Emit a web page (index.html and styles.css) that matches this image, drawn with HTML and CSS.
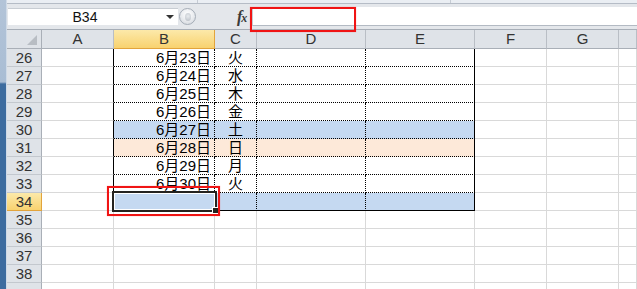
FILE: index.html
```html
<!DOCTYPE html>
<html lang="ja">
<head>
    <meta charset="UTF-8">
    <meta name="viewport" content="width=device-width, initial-scale=1.0">
    <title>Sheet1 - B34</title>
    <link rel="stylesheet" href="styles.css">
</head>
<body>

<div class="window-edge"></div>

<div class="main">
    <div class="ribbon-end">
        <div class="group g1"></div>
        <div class="group g2"></div>
    </div>

    <div class="formula-bar">
        <div class="name-box">
            <span class="name">B34</span>
            <span class="drop"><span class="arrow"></span></span>
        </div>
        <div class="knob"><span class="dimple"></span></div>
        <div class="fx"><i>f</i><i class="x">x</i></div>
        <div class="formula-input"></div>
    </div>

    <div class="sheet">
        <!-- column headers -->
        <div class="corner"><svg width="10" height="10" viewBox="0 0 10 10"><polygon points="10,0 10,10 0,10" fill="#b8bdc3"/></svg></div>
        <div class="hd">A</div>
        <div class="hd sel">B</div>
        <div class="hd">C</div>
        <div class="hd">D</div>
        <div class="hd">E</div>
        <div class="hd">F</div>
        <div class="hd">G</div>
        <div class="hd"></div>

        <div class="rh">26</div>
        <div class="c ta"></div><div class="c t date">6月23日</div><div class="c t wd">火</div><div class="c t"></div><div class="c t last"></div>
        <div class="c"></div><div class="c"></div><div class="c"></div>

        <div class="rh">27</div>
        <div class="c ta"></div><div class="c t date">6月24日</div><div class="c t wd">水</div><div class="c t"></div><div class="c t last"></div>
        <div class="c"></div><div class="c"></div><div class="c"></div>

        <div class="rh">28</div>
        <div class="c ta"></div><div class="c t date">6月25日</div><div class="c t wd">木</div><div class="c t"></div><div class="c t last"></div>
        <div class="c"></div><div class="c"></div><div class="c"></div>

        <div class="rh">29</div>
        <div class="c ta"></div><div class="c t date">6月26日</div><div class="c t wd">金</div><div class="c t"></div><div class="c t last"></div>
        <div class="c"></div><div class="c"></div><div class="c"></div>

        <div class="rh">30</div>
        <div class="c ta"></div><div class="c t date blue">6月27日</div><div class="c t wd blue">土</div><div class="c t blue"></div><div class="c t last blue"></div>
        <div class="c"></div><div class="c"></div><div class="c"></div>

        <div class="rh">31</div>
        <div class="c ta"></div><div class="c t date peach">6月28日</div><div class="c t wd peach">日</div><div class="c t peach"></div><div class="c t last peach"></div>
        <div class="c"></div><div class="c"></div><div class="c"></div>

        <div class="rh">32</div>
        <div class="c ta"></div><div class="c t date">6月29日</div><div class="c t wd">月</div><div class="c t"></div><div class="c t last"></div>
        <div class="c"></div><div class="c"></div><div class="c"></div>

        <div class="rh">33</div>
        <div class="c ta"></div><div class="c t date">6月30日</div><div class="c t wd">火</div><div class="c t"></div><div class="c t last"></div>
        <div class="c"></div><div class="c"></div><div class="c"></div>

        <div class="rh sel">34</div>
        <div class="c ta"></div>
        <div class="c t bot blue active"><span class="selection"><span class="fill-handle"></span></span></div>
        <div class="c t bot blue"></div><div class="c t bot blue"></div><div class="c t last bot blue"></div>
        <div class="c"></div><div class="c"></div><div class="c"></div>

        <div class="rh">35</div>
        <div class="c"></div><div class="c"></div><div class="c"></div><div class="c"></div><div class="c"></div><div class="c"></div><div class="c"></div><div class="c"></div>

        <div class="rh">36</div>
        <div class="c"></div><div class="c"></div><div class="c"></div><div class="c"></div><div class="c"></div><div class="c"></div><div class="c"></div><div class="c"></div>

        <div class="rh">37</div>
        <div class="c"></div><div class="c"></div><div class="c"></div><div class="c"></div><div class="c"></div><div class="c"></div><div class="c"></div><div class="c"></div>

        <div class="rh">38</div>
        <div class="c"></div><div class="c"></div><div class="c"></div><div class="c"></div><div class="c"></div><div class="c"></div><div class="c"></div><div class="c"></div>

        <div class="rh"></div>
        <div class="c"></div><div class="c"></div><div class="c"></div><div class="c"></div><div class="c"></div><div class="c"></div><div class="c"></div><div class="c"></div>
    </div>
</div>

<!-- red callout frames -->
<div class="mark mark-formula"></div>
<div class="mark mark-cell"></div>

</body>
</html>
```

FILE: styles.css
```css
body {
    margin: 0;
    padding: 0;
    position: relative;
    display: flex;
    width: 637px;
    height: 289px;
    overflow: hidden;
    background: #fff;
    font-family: "Liberation Sans", "Noto Sans CJK JP", sans-serif;
    color: #000;
}

.window-edge {
    width: 6px;
    flex: none;
    border-right: 1px solid #cfdae7;
    background: linear-gradient(to bottom, #b3c4d8 0, #a9bdd4 82px, #3d6c9f 84px, #3d6c9f 100%);
}

.main {
    flex: 1;
    display: flex;
    flex-direction: column;
}

.main > div {
    flex: none;
}

/* bottom edge of the ribbon */
.ribbon-end {
    display: flex;
    height: 3px;
    background: #eaeef3;
    border-bottom: 1px solid #b5bcc6;
}

.ribbon-end .group {
    height: 3px;
    border-right: 1px solid #c6ccd4;
    box-sizing: border-box;
}

.ribbon-end .g1 { width: 191px; }
.ribbon-end .g2 { width: 253px; }

/* formula bar */
.formula-bar {
    display: flex;
    align-items: flex-start;
    height: 25px;
    background: #e4e7eb;
    border-bottom: 1px solid #a7aeb7;
}

.name-box {
    display: flex;
    width: 170px;
    height: 17px;
    margin: 4px 0 0 1px;
    background: #fff;
    border-top: 1px solid #c8cdd3;
    box-sizing: border-box;
}

.name-box .name {
    flex: 1;
    text-align: center;
    font-size: 14px;
    line-height: 16px;
    color: #111;
}

.name-box .drop {
    width: 16px;
    display: flex;
    justify-content: center;
    align-items: center;
}

.name-box .arrow {
    width: 0;
    height: 0;
    border-left: 4px solid transparent;
    border-right: 4px solid transparent;
    border-top: 4px solid #333;
}

.knob {
    width: 17px;
    height: 17px;
    margin: 4px 0 0 1px;
    box-sizing: border-box;
    border: 1px solid #a5adb7;
    border-radius: 50%;
    background: radial-gradient(circle at 50% 35%, #ffffff 0, #eceef1 45%, #cfd4da 100%);
    display: flex;
    justify-content: center;
    align-items: center;
}

.knob .dimple {
    width: 6px;
    height: 8px;
    border-radius: 50%;
    background: radial-gradient(circle at 50% 40%, #e8ebee, #b6bcc4);
}

.fx {
    width: 15px;
    margin: 5px 0 0 41px;
    font-family: "Liberation Serif", serif;
    font-size: 16px;
    font-weight: bold;
    line-height: 16px;
    color: #3a3a3a;
    white-space: nowrap;
}

.fx .x {
    font-size: 12px;
    margin-left: -1px;
}

.formula-input {
    flex: 1;
    height: 18px;
    margin-top: 3px;
    background: #fff;
    border-left: 1px solid #c6cbd1;
    border-bottom: 1px solid #b3bac3;
}

/* worksheet */
.sheet {
    display: grid;
    grid-template-columns: 35px 72px 101px 42px 109px 109px 72px 72px 18px;
    grid-template-rows: 19px repeat(14, 18px);
    font-size: 15px;
    line-height: 17px;
}

.sheet > div {
    box-sizing: border-box;
    white-space: nowrap;
}

.corner {
    display: flex;
    justify-content: flex-end;
    align-items: flex-end;
    padding: 0 4px 3px 0;
    background: #dfe3e8;
    border-right: 1px solid #a9afb7;
    border-bottom: 1px solid #a9afb7;
}

.hd {
    background: #dfe3e8;
    border-right: 1px solid #b9bec5;
    border-bottom: 1px solid #a9afb7;
    text-align: center;
    line-height: 18px;
    color: #333;
}

.hd.sel {
    background: linear-gradient(#fce9aa, #f8d26f);
    border-right-color: #e2a43c;
    border-bottom-color: #e2a43c;
}

.rh {
    background: #dfe3e8;
    border-right: 1px solid #a9afb7;
    border-bottom: 1px solid #c3c8ce;
    text-align: center;
    color: #333;
}

.rh.sel {
    background: linear-gradient(#fce9aa, #f8d26f);
    border-right-color: #e2a43c;
    border-bottom-color: #e2a43c;
}

.c {
    border-right: 1px solid #d9d9d9;
    border-bottom: 1px solid #d9d9d9;
}

.ta {
    border-right-color: #000;
}

.t {
    border-right: 1px dotted #000;
    border-bottom: 1px dotted #000;
}

.t.last { border-right: 1px solid #000; }
.t.bot { border-bottom: 1px solid #000; }

.date {
    text-align: right;
    padding-right: 3px;
}

.wd {
    text-align: center;
}

.blue { background: #c5d9f1; }
.peach { background: #fde9d9; }

/* active cell frame */
.active {
    position: relative;
}

.selection {
    position: absolute;
    left: -2px;
    top: -2px;
    width: 105px;
    height: 21px;
    box-sizing: border-box;
    border: 2px solid #25231f;
    box-shadow: inset 0 0 0 1px #fff;
}

.fill-handle {
    position: absolute;
    right: -4px;
    bottom: -4px;
    width: 7px;
    height: 7px;
    box-sizing: border-box;
    background: #25231f;
    border: 1px solid #fff;
}

.mark {
    position: absolute;
    box-sizing: border-box;
    border: 2px solid #f01414;
    box-shadow: 0 0 1px rgba(255, 60, 60, 0.5);
}

.mark-formula {
    left: 250px;
    top: 7px;
    width: 106px;
    height: 25px;
}

.mark-cell {
    left: 107px;
    top: 186px;
    width: 113px;
    height: 30px;
}
```
